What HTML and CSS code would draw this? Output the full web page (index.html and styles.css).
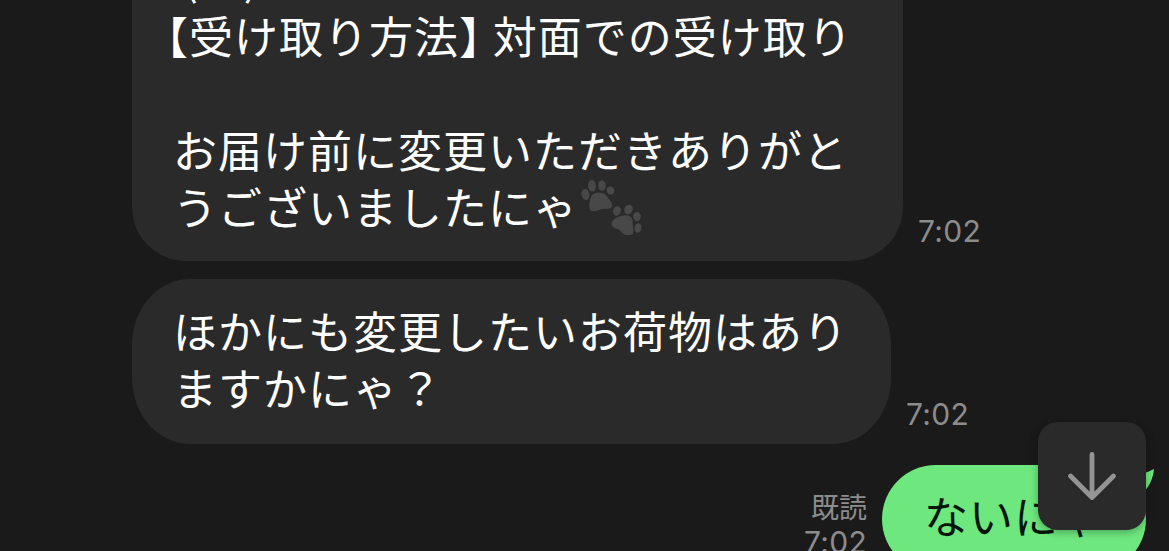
FILE: index.html
```html
<!DOCTYPE html>
<html lang="ja">
<head>
    <meta charset="UTF-8">
    <meta name="viewport" content="width=device-width, initial-scale=1.0">
    <title>Chat</title>
    <link rel="stylesheet" href="styles.css">
</head>
<body>
    <main class="chat">
        <div class="row">
            <div class="bubble first">
                <p class="date">(水)</p>
                <p class="hang"><span class="half">【</span>受け取り方法<span class="half">】</span> 対面での受け取り</p>
                <p>&nbsp;</p>
                <p>お届け前に変更いただきありがと</p>
                <p>うございましたにゃ<svg class="paws" viewBox="0 0 62 58" fill="#484848">
                    <ellipse cx="4.5" cy="14.5" rx="3.9" ry="5.6" transform="rotate(-12 4.5 14.5)"/>
                    <ellipse cx="11" cy="5.8" rx="4" ry="5.8" transform="rotate(-5 11 5.8)"/>
                    <ellipse cx="21" cy="5.5" rx="3.8" ry="5.3" transform="rotate(-5 21 5.5)"/>
                    <ellipse cx="29.5" cy="10.5" rx="3.7" ry="4" transform="rotate(-25 29.5 10.5)"/>
                    <path d="M11 15c2-2.500 6-3.200 10-2 3 .8 4.500 2.500 6 5l3.500 4.500c2 4-.7 6.500-4.500 6.300-5-.3-7 1.200-11 2.200-4.500 1-7-.5-6.700-5 .3-4 1-8.500 2.700-11z"/>
                    <ellipse cx="36" cy="31" rx="3.900" ry="4.700" transform="rotate(15 36 31)"/>
                    <ellipse cx="47.500" cy="29.500" rx="4.200" ry="4.800" transform="rotate(30 47.500 29.500)"/>
                    <ellipse cx="56" cy="36.500" rx="3.800" ry="4.600" transform="rotate(-10 56 36.500)"/>
                    <ellipse cx="57" cy="48" rx="3.500" ry="4.800" transform="rotate(8 57 48)"/>
                    <path d="M36 37.500c4-2 10.500-3.500 13.500-.8 2.800 2.300 2 5.300 2.300 8.300.2 4 1.200 6 .2 8.700-1.500 2-6.500 1.700-9 .5-2-1-3-3.500-5-4.500-3-1.500-6-2-7.200-4.500-1.200-3.500 1.500-5.700 5.200-7.700z"/>
                </svg></p>
            </div>
            <span class="time">7:02</span>
        </div>

        <div class="row">
            <div class="bubble second">
                <p>ほかにも変更したいお荷物はあり</p>
                <p>ますかにゃ？</p>
            </div>
            <span class="time">7:02</span>
        </div>

        <div class="row mine">
            <div class="status">
                <span>既読</span>
                <span class="sent">7:02</span>
            </div>
            <div class="bubble green">
                <svg class="tail" viewBox="0 0 40 40" fill="#6ee87e">
                    <path d="M0 5C14 11 27 8 38 2C37 12 33 20 26 27L30 40L0 40Z"/>
                </svg>
                <p>ないにゃ</p>
            </div>
        </div>
    </main>

    <button class="scroll-down" aria-label="down">
        <svg width="54" height="54" viewBox="0 0 54 54" fill="none" stroke="#949494" stroke-width="4.800" stroke-linecap="round" stroke-linejoin="round">
            <path d="M27 5.500V48.500M5.500 27L27 48.500L48.500 27"/>
        </svg>
    </button>
</body>
</html>
```

FILE: styles.css
```css
* {
    box-sizing: border-box;
}
body {
    margin: 0;
    background: #1a1a1a;
    font-family: "Noto Sans CJK JP", sans-serif;
}
.chat {
    height: 551px;
    overflow: hidden;
    display: flex;
    flex-direction: column;
    gap: 18px;
    padding-left: 132px;
}
.row {
    display: flex;
    flex-shrink: 0;
    align-items: flex-end;
    gap: 15px;
}
.row:first-child {
    margin-top: -72px;
}
.bubble {
    background: #2a2a2a;
    color: white;
    font-size: 44px;
    letter-spacing: 1px;
    line-height: 57px;
    white-space: nowrap;
}
.bubble p {
    margin: 0;
    height: 57px;
}
.first {
    width: 771px;
    height: 333px;
    padding: 22px 0 0 41px;
    border-radius: 54px;
}
.second {
    width: 759px;
    height: 165px;
    padding: 23px 0 0 41px;
    border-radius: 58px / 66px;
}
.bubble .date {
    padding-left: 10px;
    line-height: 53px;
}
.bubble .hang {
    text-indent: -7px;
}
.half {
    font-feature-settings: "halt";
}
.paws {
    width: 62px;
    height: 58px;
    margin-left: 3px;
    vertical-align: -13px;
}
.time, .sent {
    font-family: Inter, sans-serif;
    font-size: 30px;
    letter-spacing: 0.3px;
    line-height: 36px;
    color: #8c8c8c;
}
.time {
    margin-bottom: 12px;
}
.mine {
    justify-content: flex-end;
    align-items: flex-start;
    margin-top: 3px;
    padding-right: 23px;
}
.status {
    display: flex;
    flex-direction: column;
    align-items: flex-end;
    padding-top: 24px;
    font-size: 28px;
    line-height: 35px;
    color: #8c8c8c;
}
.green {
    position: relative;
    width: 264px;
    height: 108px;
    padding: 22px 0 0 42px;
    border-radius: 54px;
    background: #6ee87e;
    color: #071408;
}
.tail {
    position: absolute;
    top: 2px;
    right: -10px;
    width: 40px;
    height: 40px;
}
.green p {
    position: relative;
}
.scroll-down {
    position: fixed;
    right: 23px;
    bottom: 21px;
    display: flex;
    justify-content: center;
    align-items: center;
    width: 108px;
    height: 108px;
    padding: 0;
    border: none;
    border-radius: 20px;
    background: #2a2a2a;
    box-shadow: 0 2px 8px rgba(0, 0, 0, 0.3);
}
```
